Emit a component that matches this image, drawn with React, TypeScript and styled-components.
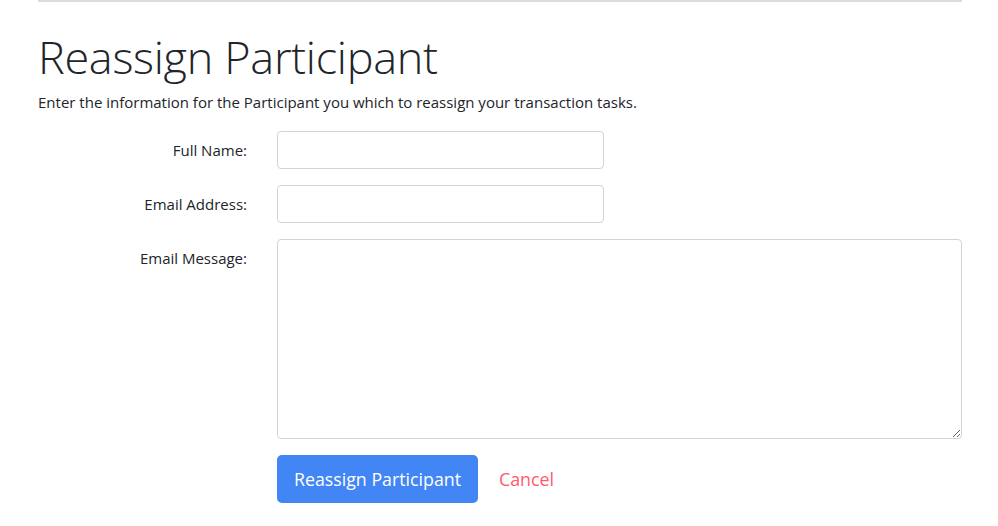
import styled, { createGlobalStyle } from "styled-components";

const GlobalStyle = createGlobalStyle`
  body {
    margin: 0;
    background: #fff;
    color: #212529;
    font-family: "Open Sans", "Noto Sans", sans-serif;
  }
  * { box-sizing: border-box; }
`;

const Page = styled.div`
  width: 924px;
  margin: 0 38px;
`;

const Rule = styled.hr`
  margin: 0;
  border: 0;
  border-top: 2px solid #dcdcdc;
`;

const Title = styled.h1`
  margin: 23px 0 0;
  font-size: 45px;
  font-weight: 300;
  line-height: 63px;
  letter-spacing: -0.3px;
`;

const Intro = styled.p`
  margin: 2px 0 17px;
  font-size: 15px;
  line-height: 24px;
`;

const Form = styled.form`
  display: grid;
  grid-template-columns: 209px 1fr;
  column-gap: 30px;
  row-gap: 16px;
`;

const Label = styled.label<{ $top?: boolean }>`
  text-align: right;
  font-size: 15px;
  line-height: 24px;
  padding-top: ${(p) => (p.$top ? "7px" : "0")};
  align-self: ${(p) => (p.$top ? "start" : "center")};
`;

const Input = styled.input`
  width: 327px;
  height: 38px;
  border: 1px solid #ced4da;
  border-radius: 4px;
  padding: 6px 12px;
  font: inherit;
`;

const TextArea = styled.textarea`
  width: 100%;
  height: 200px;
  border: 1px solid #ced4da;
  border-radius: 4px;
  padding: 6px 12px;
  font: inherit;
  display: block;
`;

const Actions = styled.div`
  grid-column: 2;
  display: flex;
  align-items: center;
  gap: 21px;
`;

const PrimaryButton = styled.button`
  height: 48px;
  width: 201px;
  border: 0;
  border-radius: 5px;
  background: #4285f4;
  color: #fff;
  font-family: inherit;
  font-size: 17.8px;
  padding: 0;
`;

const CancelLink = styled.a`
  color: #ff5a6b;
  font-size: 17.8px;
  text-decoration: none;
`;

export default function App() {
  return (
    <>
      <GlobalStyle />
      <Page>
        <Rule />
        <Title>Reassign Participant</Title>
        <Intro>
          Enter the information for the Participant you which to reassign your
          transaction tasks.
        </Intro>
        <Form onSubmit={(e) => e.preventDefault()}>
          <Label htmlFor="fullName">Full Name:</Label>
          <Input id="fullName" type="text" />
          <Label htmlFor="email">Email Address:</Label>
          <Input id="email" type="email" />
          <Label htmlFor="message" $top>
            Email Message:
          </Label>
          <TextArea id="message" />
          <Actions>
            <PrimaryButton type="submit">Reassign Participant</PrimaryButton>
            <CancelLink href="#">Cancel</CancelLink>
          </Actions>
        </Form>
      </Page>
    </>
  );
}
